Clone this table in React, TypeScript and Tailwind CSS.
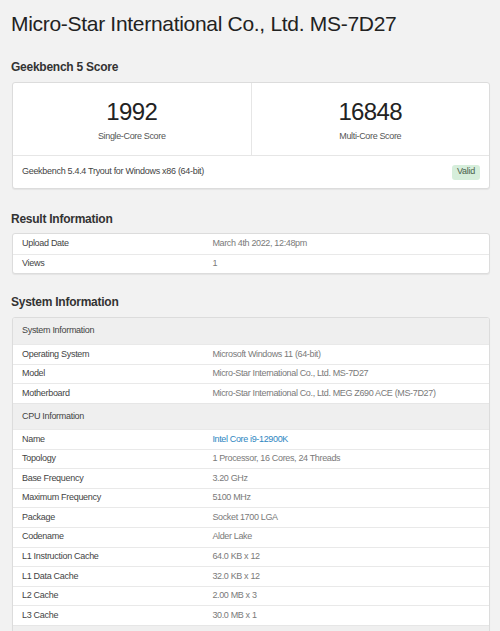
import React from 'react';

type Row = { label: string; value: string; link?: boolean };

const resultRows: Row[] = [
  { label: 'Upload Date', value: 'March 4th 2022, 12:48pm' },
  { label: 'Views', value: '1' },
];

const systemRows: Row[] = [
  { label: 'Operating System', value: 'Microsoft Windows 11 (64-bit)' },
  { label: 'Model', value: 'Micro-Star International Co., Ltd. MS-7D27' },
  { label: 'Motherboard', value: 'Micro-Star International Co., Ltd. MEG Z690 ACE (MS-7D27)' },
];

const cpuRows: Row[] = [
  { label: 'Name', value: 'Intel Core i9-12900K', link: true },
  { label: 'Topology', value: '1 Processor, 16 Cores, 24 Threads' },
  { label: 'Base Frequency', value: '3.20 GHz' },
  { label: 'Maximum Frequency', value: '5100 MHz' },
  { label: 'Package', value: 'Socket 1700 LGA' },
  { label: 'Codename', value: 'Alder Lake' },
  { label: 'L1 Instruction Cache', value: '64.0 KB x 12' },
  { label: 'L1 Data Cache', value: '32.0 KB x 12' },
  { label: 'L2 Cache', value: '2.00 MB x 3' },
  { label: 'L3 Cache', value: '30.0 MB x 1' },
];

const SectionTitle: React.FC<{ children: React.ReactNode; className?: string }> = ({ children, className }) => (
  <h2 className={`text-[12px] leading-[16px] font-bold tracking-[-0.25px] text-[#333] ${className ?? ''}`}>{children}</h2>
);

const InfoRow: React.FC<{ row: Row; first?: boolean }> = ({ row, first }) => (
  <div className={`flex h-[19.6px] items-center ${first ? '' : 'border-t border-[#e9e9e9]'}`}>
    <div className="w-[40%] px-[9px] text-[#444]">{row.label}</div>
    <div className={`flex-1 px-[9px] tracking-[-0.35px] ${row.link ? 'text-[#2e86c1]' : 'text-[#7a7a7a]'}`}>{row.value}</div>
  </div>
);

const GroupHeader: React.FC<{ title?: string; first?: boolean }> = ({ title, first }) => (
  <div className={`flex h-[26px] items-center bg-[#efefef] px-[9px] text-[#444] ${first ? '' : 'border-t border-[#e6e6e6]'}`}>
    {title}
  </div>
);

export default function App() {
  return (
    <div
      className="h-[631px] overflow-hidden bg-[#f2f2f2] text-[9px] tracking-[-0.3px]"
      style={{ fontFamily: '"Liberation Sans", Arial, sans-serif' }}
    >
      <div className="ml-[11px] mr-[10px] pt-[12px]">
        <h1 className="text-[21px] leading-[24px] tracking-[-0.3px] text-[#222]">
          Micro-Star International Co., Ltd. MS-7D27
        </h1>

        <SectionTitle className="mt-[23px] mb-[7px]">Geekbench 5 Score</SectionTitle>
        <div className="ml-px overflow-hidden rounded-[3px] border border-[#dcdcdc] bg-white shadow-[0_1px_1px_rgba(0,0,0,0.06)]">
          <div className="flex border-b border-[#e6e6e6]">
            <div className="flex-1 border-r border-[#e6e6e6] pt-[15px] pb-[13.5px] text-center">
              <div className="text-[24px] leading-[28px] tracking-[-0.6px] text-[#222]">1992</div>
              <div className="mt-[3.5px] leading-[12px] tracking-[-0.35px] text-[#555]">Single-Core Score</div>
            </div>
            <div className="flex-1 pt-[15px] pb-[13.5px] text-center">
              <div className="text-[24px] leading-[28px] tracking-[-0.6px] text-[#222]">16848</div>
              <div className="mt-[3.5px] leading-[12px] tracking-[-0.35px] text-[#555]">Multi-Core Score</div>
            </div>
          </div>
          <div className="flex h-[32px] items-center justify-between px-[9px]">
            <span className="text-[#444]">Geekbench 5.4.4 Tryout for Windows x86 (64-bit)</span>
            <span className="flex h-[15px] w-[28px] items-center justify-center rounded-[3px] bg-[#d6eedb] text-[#4a604a]">
              Valid
            </span>
          </div>
        </div>

        <SectionTitle className="mt-[22px] mb-[6px]">Result Information</SectionTitle>
        <div className="ml-px overflow-hidden rounded-[3px] border border-[#dcdcdc] bg-white shadow-[0_1px_1px_rgba(0,0,0,0.06)]">
          {resultRows.map((r, i) => (
            <InfoRow key={r.label} row={r} first={i === 0} />
          ))}
        </div>

        <SectionTitle className="mt-[20px] mb-[7px]">System Information</SectionTitle>
        <div className="ml-px overflow-hidden rounded-t-[3px] border border-[#dcdcdc] bg-white shadow-[0_1px_1px_rgba(0,0,0,0.06)]">
          <GroupHeader title="System Information" first />
          {systemRows.map((r) => (
            <InfoRow key={r.label} row={r} />
          ))}
          <GroupHeader title="CPU Information" />
          {cpuRows.map((r) => (
            <InfoRow key={r.label} row={r} />
          ))}
          <GroupHeader />
        </div>
      </div>
    </div>
  );
}
